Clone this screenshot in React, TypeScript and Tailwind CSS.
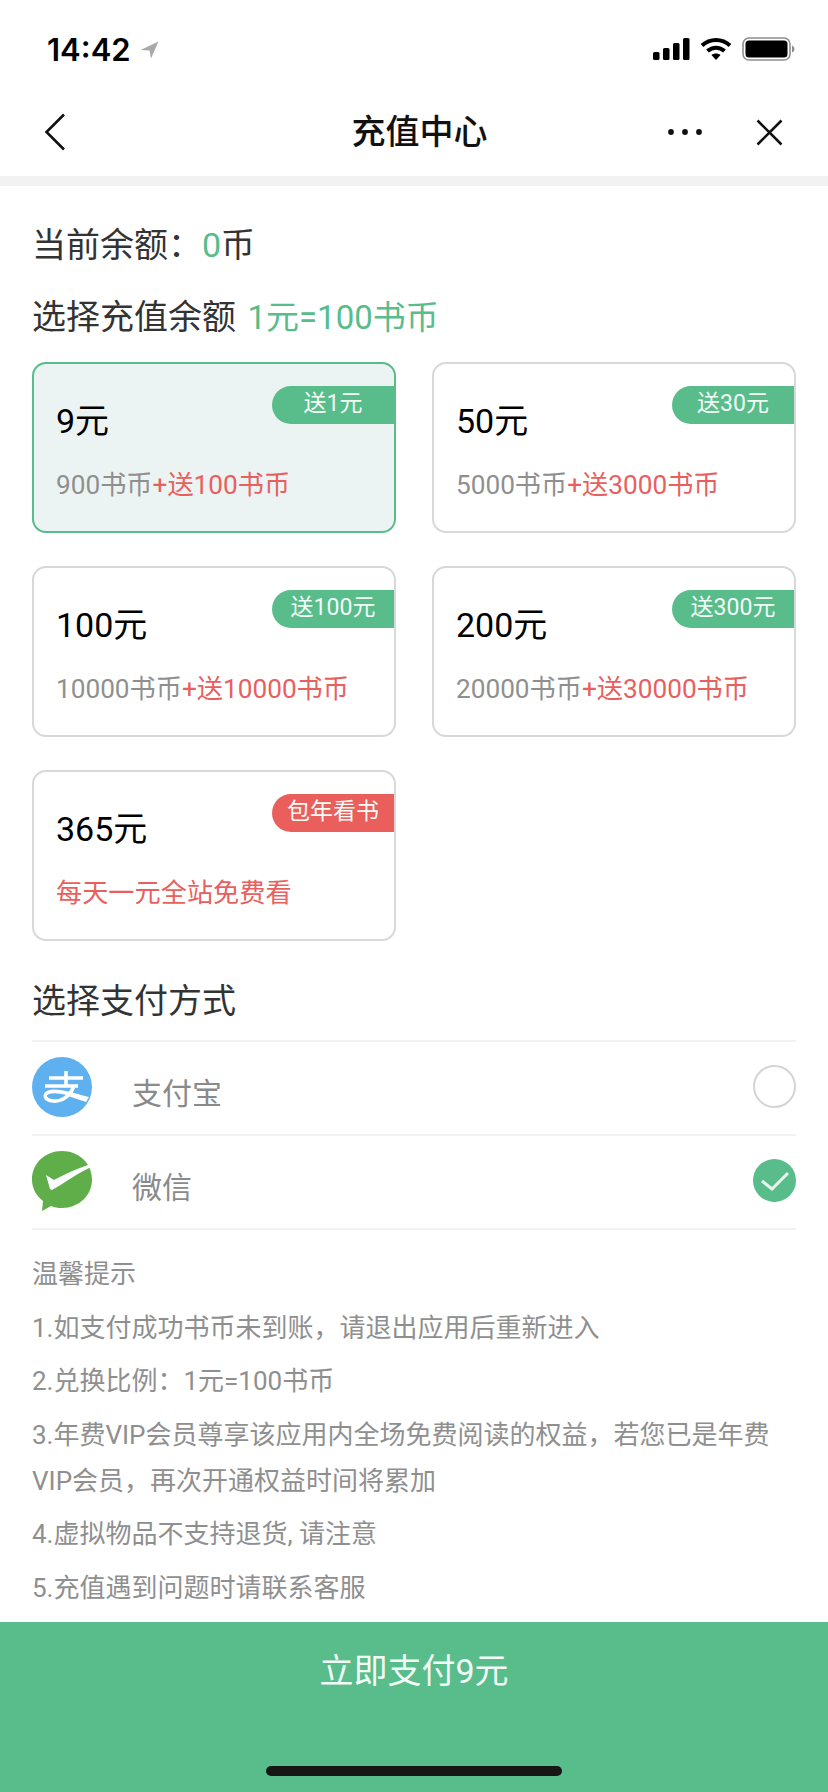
import React from "react";

const plans = [
  { price: "9元", base: "900书币", extra: "+送100书币", badge: "送1元", selected: true },
  { price: "50元", base: "5000书币", extra: "+送3000书币", badge: "送30元" },
  { price: "100元", base: "10000书币", extra: "+送10000书币", badge: "送100元" },
  { price: "200元", base: "20000书币", extra: "+送30000书币", badge: "送300元" },
];

function Card({ price, base, extra, badge, selected, red }: { price: string; base?: string; extra: string; badge: string; selected?: boolean; red?: boolean }) {
  return (
    <div className={`relative h-[171px] rounded-[14px] border-2 ${selected ? "border-[#58bd8b] bg-[#ecf4f3]" : "border-[#d8d8d8] bg-white"}`}>
      <div className={`absolute right-0 top-[22px] flex h-[38px] w-[122px] items-center justify-center rounded-l-[19px] pb-[1px] text-[23px] text-[#f3fbf7] ${red ? "bg-[#ea5f5c]" : "bg-[#58bd8b]"}`}>{badge}</div>
      <div className="pl-[22px] pt-[35px] text-[34px] leading-[44px] text-black">{price}</div>
      <div className="pl-[22px] pt-[24px] text-[26.2px] leading-[36px] text-[#8f8f8f]">
        {base}
        <span className="text-[#e8605d]">{extra}</span>
      </div>
    </div>
  );
}

export default function App() {
  return (
    <div className="flex h-[1792px] w-[828px] flex-col overflow-hidden bg-white font-['Roboto','Noto_Sans_CJK_SC',sans-serif]">
      {/* Status bar */}
      <div className="flex h-[88px] items-start justify-between pl-[47px] pr-[33px] pt-[28px]">
        <div className="flex items-center gap-[9px]">
          <span className="font-['Inter',sans-serif] text-[31px] font-semibold leading-[44px] text-black">14:42</span>
          <svg width="19" height="18" viewBox="0 0 19 18"><path d="M18.5 0.5 L0.5 9 L9.5 9.5 L11 17.5 Z" fill="#a9a9a9" /></svg>
        </div>
        <div className="flex items-center gap-[10px] pt-[9px]">
          <svg width="37" height="24" viewBox="0 0 37 24" fill="#000">
            <rect x="0" y="15" width="6.5" height="8" rx="1.5" />
            <rect x="10" y="11" width="6.5" height="12" rx="1.5" />
            <rect x="20" y="6" width="6.5" height="17" rx="1.5" />
            <rect x="30" y="1" width="6.5" height="22" rx="1.5" />
          </svg>
          <svg width="32" height="24" viewBox="0 0 32 24" fill="none" stroke="#000" strokeWidth="4">
            <path d="M2 8.5 C10 1 22 1 30 8.5" />
            <path d="M7.5 14 C12.5 9.5 19.5 9.5 24.5 14" />
            <path d="M16 23 L11.5 18 C14 16 18 16 20.5 18 Z" fill="#000" stroke="none" />
          </svg>
          <svg width="53" height="24" viewBox="0 0 53 24" fill="none">
            <rect x="1" y="1" width="47" height="22" rx="6" stroke="#8e8e8e" strokeWidth="1.6" />
            <rect x="3.5" y="3.5" width="42" height="17" rx="3.5" fill="#000" />
            <path d="M50 8.5 C51.5 9 52.5 10.5 52.5 12 C52.5 13.5 51.5 15 50 15.5 Z" fill="#8e8e8e" />
          </svg>
        </div>
      </div>

      {/* Navigation */}
      <div className="grid h-[88px] grid-cols-[1fr_auto_1fr] items-center pl-[44px] pr-[45px]">
        <svg width="22" height="38" viewBox="0 0 22 38" fill="none" stroke="#111" strokeWidth="2.6"><path d="M20 1.5 L2.5 19 L20 36.5" /></svg>
        <div className="pl-[12px] text-[34px] font-medium text-[#111]">充值中心</div>
        <div className="flex items-center justify-end gap-[53px]">
          <svg width="36" height="8" viewBox="0 0 36 8" fill="#111">
            <circle cx="4" cy="4" r="2.9" />
            <circle cx="18" cy="4" r="2.9" />
            <circle cx="32" cy="4" r="2.9" />
          </svg>
          <svg width="27" height="27" viewBox="0 0 27 27" fill="none" stroke="#111" strokeWidth="2.6"><path d="M1.5 1.5 L25.5 25.5 M25.5 1.5 L1.5 25.5" /></svg>
        </div>
      </div>
      <div className="h-[10px] bg-[#f2f2f2]" />

      {/* Content */}
      <div className="px-[32px]">
        <div className="pt-[34px] text-[34px] leading-[50px] text-[#333]">
          当前余额：<span className="text-[#58bd8b]">0</span>币
        </div>
        <div className="pt-[22px] text-[34px] leading-[50px] text-[#333]">
          选择充值余额 <span className="ml-[3px] text-[33px] text-[#58bd8b]">1元=100书币</span>
        </div>

        <div className="mt-[19px] grid grid-cols-2 gap-x-[36px] gap-y-[33px]">
          {plans.map((p) => (
            <Card key={p.price} {...p} />
          ))}
          <Card price="365元" extra="每天一元全站免费看" badge="包年看书" red />
        </div>

        <div className="pt-[35px] text-[34px] leading-[50px] text-[#333]">选择支付方式</div>

        <div className="mt-[14px] border-t-2 border-[#f2f2f2]">
          <div className="flex h-[94px] items-start border-b-2 border-[#f2f2f2]">
            <svg className="mt-[15px]" width="60" height="60" viewBox="0 0 60 60">
              <circle cx="30" cy="30" r="30" fill="#5fb0ee" />
              <g fill="none" stroke="#fff" strokeWidth="3.6">
                <path d="M17 21 H51" />
                <path d="M34 14 V29" />
                <path d="M13 29 H46" />
                <path d="M42 29 C38 39 30 45 21 44 C12 43 11 37 17 35 C24 33 38 36 55 42" />
              </g>
              <path d="M30 34 L57 40 L54 45 L36 39 Z" fill="#fff" />
            </svg>
            <div className="ml-[40px] mt-[30px] text-[30px] leading-[44px] text-[#8a8a8a]">支付宝</div>
            <div className="ml-auto mt-[23px] h-[43px] w-[43px] rounded-full border-[2.5px] border-[#d4d4d4]" />
          </div>
          <div className="flex h-[94px] items-start border-b-2 border-[#f2f2f2]">
            <svg className="mt-[15px]" width="60" height="62" viewBox="0 0 60 62">
              <path d="M30 0 C47 0 60 12.5 60 28.5 C60 44.5 47 57 30 57 C26 57 22.5 56.5 19 55 L10 60 L11 50 C4 44.5 0 37 0 28.5 C0 12.5 13 0 30 0 Z" fill="#5fae4a" />
              <path d="M14 24 L22 29 C33 23 44 18 56 14 L59 16 C46 22 34 31 20 39 L18 38 Z" fill="#fff" />
            </svg>
            <div className="ml-[40px] mt-[30px] text-[30px] leading-[44px] text-[#8a8a8a]">微信</div>
            <svg className="ml-auto mt-[23px]" width="43" height="43" viewBox="0 0 43 43">
              <circle cx="21.5" cy="21.5" r="21.5" fill="#58bd8b" />
              <path d="M9 22 L19 30 L35 14" fill="none" stroke="#e9f6f0" strokeWidth="3" />
            </svg>
          </div>
        </div>

        <div className="pt-[21px] text-[26px] leading-[46px] text-[#8f8f8f]">
          <p>温馨提示</p>
          <p className="mt-[7.5px]">1.如支付成功书币未到账，请退出应用后重新进入</p>
          <p className="mt-[7.5px]">2.兑换比例：1元=100书币</p>
          <p className="mt-[7.5px]">3.年费VIP会员尊享该应用内全场免费阅读的权益，若您已是年费VIP会员，再次开通权益时间将累加</p>
          <p className="mt-[7.5px]">4.虚拟物品不支持退货, 请注意</p>
          <p className="mt-[7.5px]">5.充值遇到问题时请联系客服</p>
        </div>
      </div>

      {/* Pay button */}
      <div className="mt-auto flex h-[170px] flex-col items-center bg-[#58bd8b]">
        <div className="pt-[24px] text-[34px] leading-[50px] text-[#f3fbf7]">立即支付9元</div>
        <div className="mt-auto mb-[16px] h-[10px] w-[296px] rounded-full bg-[#161616]" />
      </div>
    </div>
  );
}
